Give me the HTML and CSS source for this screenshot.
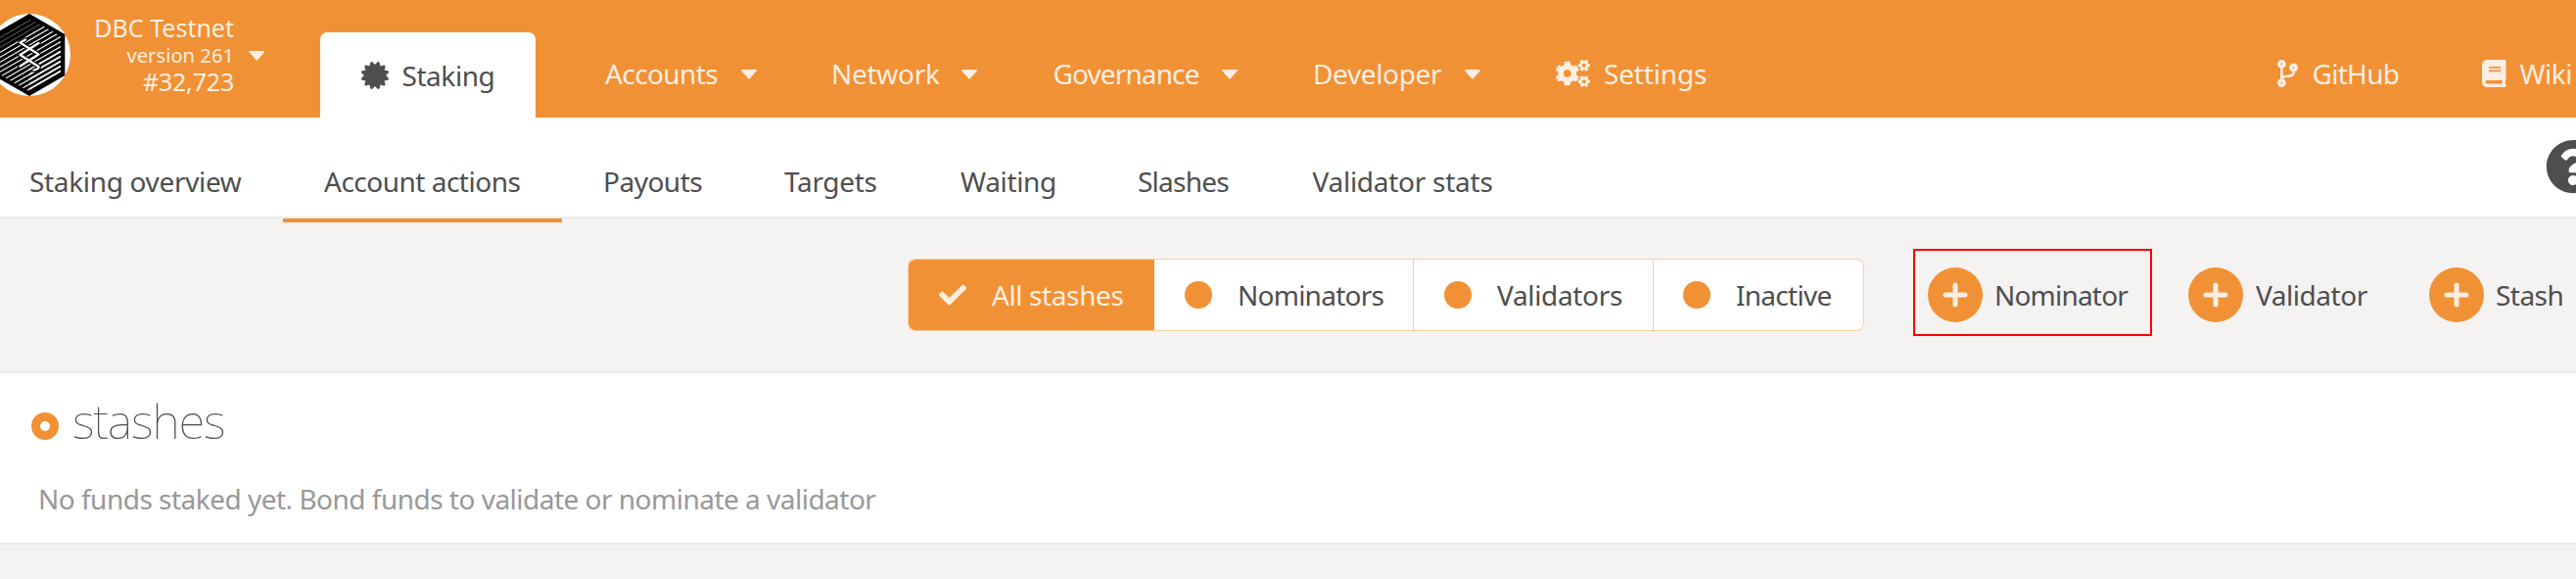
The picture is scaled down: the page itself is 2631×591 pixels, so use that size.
FILE: index.html
```
<!DOCTYPE html>
<html lang="en">
<head>
<meta charset="utf-8">
<title>Staking</title>
<link rel="stylesheet" href="styles.css">
</head>
<body>
<header class="header">
  <svg class="logo" viewBox="-12 14 84 84">
    <defs>
      <clipPath id="hex"><path d="M30 18.500L62 37V75L30 93.500L-2 75V37z"/></clipPath>
    </defs>
    <circle cx="30" cy="56" r="42" fill="#fff"/>
    <path d="M30 14L66.300 35V77L30 98L-6.300 77V35z" fill="#000"/>
    <g clip-path="url(#hex)" stroke="#fff">
      <path stroke-width=".6" stroke="#aaa" d="M-2 39.500L62 2.500M-2 44.500L62 7.500M-2 49.500L62 12.500"/>
      <path stroke-width="1.100" d="M-2 54.500L62 17.500M-2 59.500L62 22.500M-2 64.500L62 27.500M-2 69.500L62 32.500M-2 74.500L62 37.500M-2 79.500L62 42.500M-2 84.500L62 47.500M-2 89.500L62 52.500M-2 94.500L62 57.500M-2 99.500L62 62.500M-2 104.500L62 67.500M-2 109.500L62 72.500"/>
      <path stroke-width="1.700" d="M30 71L62 52.500M30 76L62 57.500M30 81L62 62.500M30 86L62 67.500M30 91L62 72.500"/>
    </g>
    <g fill="none" stroke-linejoin="round" stroke-linecap="round">
      <path stroke="#000" stroke-width="4.500" d="M26 40.500L20.500 43.500L39.500 55.500L20.500 67.500M39.500 44L20.500 56L39.500 68Q40.500 70 34.500 71.500"/>
      <path stroke="#fff" stroke-width="2.300" d="M26 40.500L20.500 43.500L39.500 55.500L20.500 67.500M39.500 44L20.500 56L39.500 68Q40.500 70 34.500 71.500"/>
    </g>
  </svg>
  <div class="chain">
    <div class="chain-name">DBC Testnet</div>
    <div class="chain-version">version 261</div>
    <div class="chain-block">#32,723</div>
  </div>
  <svg class="caret caret-chain" viewBox="0 0 16 10"><path d="M.8 0H15.200Q16.400 .3 15.600 1.400L8.800 9.300Q8 10.200 7.200 9.300L.4 1.400Q-.4 .3 .8 0z"/></svg>
  <a class="tab-active">
    <svg class="icon-28" viewBox="0 0 512 512"><path d="M458.622 255.920l45.985-45.005c13.708-12.977 7.316-36.039-10.664-40.339l-62.650-15.990 17.661-62.015c4.991-17.838-11.829-34.663-29.661-29.671l-61.994 17.667-15.984-62.671C337.085.197 313.765-6.276 300.990 7.228L256 53.570 211.011 7.229c-12.630-13.351-36.047-7.234-40.325 10.668l-15.984 62.671-61.995-17.667C74.870 57.907 58.056 74.738 63.046 92.572l17.661 62.015-62.650 15.990C.069 174.878-6.310 197.944 7.392 210.915l45.985 45.005-45.985 45.004c-13.708 12.977-7.316 36.039 10.664 40.339l62.650 15.990-17.661 62.015c-4.991 17.838 11.829 34.663 29.661 29.671l61.994-17.667 15.984 62.671c4.439 18.575 27.696 24.018 40.325 10.668L256 458.610l44.989 46.001c12.500 13.488 35.987 7.486 40.325-10.668l15.984-62.671 61.994 17.667c17.836 4.994 34.651-11.837 29.661-29.671l-17.661-62.015 62.650-15.990c17.987-4.302 24.366-27.367 10.664-40.339l-45.984-45.004z"/></svg>
    <span class="tab-label">Staking</span>
  </a>
  <nav class="menu">
    <a class="menu-item accounts"><span>Accounts</span><svg class="caret" viewBox="0 0 16 10"><path d="M.8 0H15.200Q16.400 .3 15.600 1.400L8.800 9.300Q8 10.200 7.200 9.300L.4 1.400Q-.4 .3 .8 0z"/></svg></a>
    <a class="menu-item network"><span>Network</span><svg class="caret" viewBox="0 0 16 10"><path d="M.8 0H15.200Q16.400 .3 15.600 1.400L8.800 9.300Q8 10.200 7.200 9.300L.4 1.400Q-.4 .3 .8 0z"/></svg></a>
    <a class="menu-item governance"><span>Governance</span><svg class="caret" viewBox="0 0 16 10"><path d="M.8 0H15.200Q16.400 .3 15.600 1.400L8.800 9.300Q8 10.200 7.200 9.300L.4 1.400Q-.4 .3 .8 0z"/></svg></a>
    <a class="menu-item developer"><span>Developer</span><svg class="caret" viewBox="0 0 16 10"><path d="M.8 0H15.200Q16.400 .3 15.600 1.400L8.800 9.300Q8 10.200 7.200 9.300L.4 1.400Q-.4 .3 .8 0z"/></svg></a>
    <a class="menu-item settings">
      <svg class="icon-cogs" viewBox="0 0 640 512">
        <path id="cog" d="M512.100 191l-8.200 14.300c-3 5.300-9.400 7.500-15.100 5.400-11.800-4.400-22.600-10.700-32.100-18.600-4.600-3.800-5.800-10.500-2.800-15.700l8.200-14.300c-6.900-8-12.300-17.300-15.900-27.400h-16.500c-6 0-11.200-4.300-12.200-10.300-2-12-2.100-24.600 0-37.100 1-6 6.200-10.400 12.200-10.400h16.500c3.600-10.100 9-19.400 15.900-27.400l-8.200-14.300c-3-5.200-1.900-11.900 2.800-15.700 9.500-7.900 20.400-14.200 32.100-18.600 5.700-2.100 12.100.1 15.100 5.400l8.200 14.300c10.500-1.900 21.200-1.900 31.700 0L552 6.300c3-5.300 9.400-7.500 15.100-5.400 11.800 4.400 22.600 10.700 32.100 18.600 4.600 3.800 5.800 10.500 2.800 15.700l-8.200 14.300c6.900 8 12.300 17.300 15.900 27.400h16.500c6 0 11.200 4.300 12.200 10.300 2 12 2.100 24.600 0 37.100-1 6-6.200 10.400-12.200 10.400h-16.500c-3.600 10.100-9 19.400-15.900 27.400l8.200 14.300c3 5.200 1.900 11.900-2.800 15.700-9.500 7.900-20.400 14.200-32.100 18.600-5.700 2.100-12.100-.1-15.100-5.400l-8.200-14.300c-10.400 1.900-21.200 1.900-31.700 0zm-10.500-58.800c38.500 29.600 82.400-14.300 52.800-52.800-38.500-29.700-82.400 14.300-52.800 52.800z"/>
        <use href="#cog" y="299"/>
        <path d="M386.300 286.100l33.700 16.800c10.100 5.800 14.500 18.100 10.500 29.100-8.900 24.200-26.400 46.400-42.600 65.800-7.400 8.900-20.200 11.100-30.300 5.300l-29.100-16.800c-16 13.700-34.600 24.600-54.900 31.700v33.600c0 11.600-8.300 21.600-19.700 23.600-24.600 4.200-50.400 4.400-75.900 0-11.500-2-20-11.900-20-23.600V418c-20.300-7.200-38.900-18-54.900-31.700L74 403c-10 5.800-22.900 3.600-30.300-5.300-16.200-19.400-33.300-41.600-42.200-65.700-4-10.900.4-23.200 10.500-29.100l33.300-16.800c-3.900-20.900-3.900-42.400 0-63.400L12 205.800c-10.100-5.800-14.600-18.100-10.500-29 8.900-24.200 26-46.400 42.200-65.800 7.400-8.900 20.200-11.100 30.300-5.300l29.100 16.800c16-13.700 34.600-24.600 54.900-31.700V57.100c0-11.500 8.200-21.500 19.600-23.500 24.600-4.200 50.500-4.400 76-.1 11.500 2 20 11.900 20 23.600v33.600c20.300 7.200 38.900 18 54.900 31.700l29.100-16.800c10-5.800 22.900-3.600 30.300 5.300 16.200 19.400 33.200 41.600 42.100 65.800 4 10.900.1 23.200-10 29.100l-33.700 16.800c3.900 21 3.900 42.500 0 63.500zm-117.600 21.100c59.200-77-28.700-164.900-105.700-105.700-59.200 77 28.700 164.900 105.700 105.700z"/>
      </svg>
      <span>Settings</span>
    </a>
    <a class="menu-item github">
      <svg class="icon-branch" viewBox="0 0 384 512"><path d="M384 144c0-44.200-35.800-80-80-80s-80 35.800-80 80c0 36.400 24.300 67.100 57.500 76.800-.6 16.100-4.200 28.500-11 36.900-15.400 19.200-49.300 22.400-85.200 25.700-28.200 2.600-57.400 5.400-81.300 16.900v-144c32.500-10.200 56-40.500 56-76.300 0-44.200-35.800-80-80-80S0 35.800 0 80c0 35.800 23.500 66.100 56 76.300v199.300C23.500 365.900 0 396.200 0 432c0 44.200 35.800 80 80 80s80-35.800 80-80c0-34-21.200-63.100-51.200-74.600 3.100-5.200 7.800-9.800 14.900-13.400 16.200-8.200 40.400-10.400 66.100-12.800 42.200-3.900 90-8.400 118.200-43.400 14-17.400 21.100-39.800 21.600-67.900 31.600-10.800 54.400-40.700 54.400-75.900zM80 64c8.800 0 16 7.200 16 16s-7.200 16-16 16-16-7.200-16-16 7.200-16 16-16zm0 384c-8.800 0-16-7.200-16-16s7.200-16 16-16 16 7.200 16 16-7.200 16-16 16zm224-320c8.800 0 16 7.200 16 16s-7.200 16-16 16-16-7.200-16-16 7.200-16 16-16z"/></svg>
      <span>GitHub</span>
    </a>
    <a class="menu-item wiki">
      <svg class="icon-book" viewBox="0 0 448 512"><path d="M448 360V24c0-13.300-10.700-24-24-24H96C43 0 0 43 0 96v320c0 53 43 96 96 96h328c13.300 0 24-10.700 24-24v-16c0-7.500-3.500-14.300-8.900-18.700-4.200-15.400-4.200-59.300 0-74.700 5.400-4.300 8.900-11.100 8.900-18.600zM128 134c0-3.300 2.700-6 6-6h212c3.300 0 6 2.700 6 6v20c0 3.300-2.700 6-6 6H134c-3.300 0-6-2.700-6-6v-20zm0 64c0-3.300 2.700-6 6-6h212c3.300 0 6 2.700 6 6v20c0 3.300-2.700 6-6 6H134c-3.300 0-6-2.700-6-6v-20zm253.400 250H96c-17.700 0-32-14.300-32-32 0-17.600 14.400-32 32-32h285.400c-1.900 17.100-1.900 46.900 0 64z"/></svg>
      <span>Wiki</span>
    </a>
  </nav>
</header>

<nav class="tabs">
  <a class="tab overview">Staking overview</a>
  <a class="tab actions selected">Account actions</a>
  <a class="tab payouts">Payouts</a>
  <a class="tab targets">Targets</a>
  <a class="tab waiting">Waiting</a>
  <a class="tab slashes">Slashes</a>
  <a class="tab stats">Validator stats</a>
  <svg class="help" viewBox="0 0 512 512"><path d="M504 256c0 136.997-111.043 248-248 248S8 392.997 8 256C8 119.083 119.043 8 256 8s248 111.083 248 248zM262.655 90c-54.497 0-89.255 22.957-116.549 63.758-3.536 5.286-2.353 12.415 2.715 16.258l34.699 26.310c5.205 3.947 12.621 3.008 16.665-2.122 17.864-22.658 30.113-35.797 57.303-35.797 20.429 0 45.698 13.148 45.698 32.958 0 14.976-12.363 22.667-32.534 33.976C247.128 238.528 216 254.941 216 296v4c0 6.627 5.373 12 12 12h56c6.627 0 12-5.373 12-12v-1.333c0-28.462 83.186-29.647 83.186-106.667 0-58.002-60.165-102-116.531-102zM256 338c-25.365 0-46 20.635-46 46 0 25.364 20.635 46 46 46s46-20.636 46-46c0-25.365-20.635-46-46-46z"/></svg>
</nav>

<main>
  <div class="toolbar">
    <div class="toggle">
      <button class="option all"><svg class="icon-28" viewBox="0 0 512 512"><path d="M173.898 439.404l-166.400-166.400c-9.997-9.997-9.997-26.206 0-36.204l36.203-36.204c9.997-9.998 26.207-9.998 36.204 0L192 312.690 432.095 72.596c9.997-9.997 26.207-9.997 36.204 0l36.203 36.204c9.997 9.997 9.997 26.206 0 36.204l-294.400 294.401c-9.998 9.997-26.207 9.997-36.204-.001z"/></svg><span>All stashes</span></button>
      <button class="option nominators"><i class="dot"></i><span>Nominators</span></button>
      <button class="option validators"><i class="dot"></i><span>Validators</span></button>
      <button class="option inactive"><i class="dot"></i><span>Inactive</span></button>
    </div>
    <button class="action add-nominator"><svg class="plus" viewBox="0 0 56 56"><circle cx="28" cy="28" r="28"/><path d="M18 28H38M28 18V38"/></svg><span>Nominator</span></button>
    <button class="action add-validator"><svg class="plus" viewBox="0 0 56 56"><circle cx="28" cy="28" r="28"/><path d="M18 28H38M28 18V38"/></svg><span>Validator</span></button>
    <button class="action add-stash"><svg class="plus" viewBox="0 0 56 56"><circle cx="28" cy="28" r="28"/><path d="M18 28H38M28 18V38"/></svg><span>Stash</span></button>
  </div>

  <section class="stashes">
    <h1 class="title"><i class="ring"></i><span>stashes</span></h1>
    <p class="empty">No funds staked yet. Bond funds to validate or nominate a validator</p>
  </section>
</main>
</body>
</html>
```
FILE: styles.css
```
* { box-sizing: border-box; }

body {
  margin: 0;
  height: 591px;
  overflow: hidden;
  background: #f4f3f1;
  color: #4e4e4e;
  font: 28px/40px "Noto Sans", "Open Sans", sans-serif;
  white-space: nowrap;
}

svg { display: block; flex: none; fill: currentColor; }
span { flex: none; }
.icon-28 { width: 28px; height: 28px; }

/* Header */
.header {
  display: flex;
  align-items: flex-start;
  height: 120px;
  overflow: hidden;
  background: #f19135;
  color: #ffeee1;
}
.logo { width: 84px; height: 84px; margin: 14px 0 0 -12px; }
.chain {
  width: 167px;
  flex: none;
  padding-top: 15px;
  text-align: right;
  font-size: 25px;
  line-height: 27.500px;
}
.chain-version { font-size: 20px; letter-spacing: .1px; }
.chain-block { letter-spacing: -.18px; }
.caret { width: 16px; height: 10px; margin-top: 2px; }
.caret-chain { width: 16.500px; margin: 52px 0 0 14.500px; }
.tab-active {
  display: flex;
  align-items: center;
  flex: none;
  width: 220px;
  height: 87px;
  margin: 33px 0 0 57px;
  padding-left: 42px;
  border-radius: 7px 7px 0 0;
  background: #fff;
  color: #4e4e4e;
}
.tab-label { margin-left: 13.500px; letter-spacing: -.44px; }
.menu { display: flex; flex: 1; padding-top: 55px; }
.menu-item {
  display: flex;
  flex: none;
  align-items: center;
  justify-content: space-between;
  height: 40px;
}
.accounts { width: 154.500px; margin-left: 71px; letter-spacing: -.6px; }
.network { width: 149px; margin-left: 76.500px; letter-spacing: -.28px; }
.governance { width: 188px; margin-left: 77.500px; letter-spacing: -.88px; }
.developer { width: 171px; margin-left: 77.500px; letter-spacing: -.36px; }
.settings { justify-content: flex-start; gap: 14px; width: 160px; margin-left: 77px; letter-spacing: -.16px; }
.github { justify-content: flex-start; gap: 14.500px; width: 130px; margin-left: 577px; letter-spacing: -.7px; }
.wiki { justify-content: flex-start; gap: 14px; width: 96px; margin-left: 79px; letter-spacing: -.5px; }
.icon-cogs { width: 35px; height: 28px; }
.icon-branch { width: 21px; height: 28px; }
.icon-book { width: 24.500px; height: 28px; }

/* Page tabs */
.tabs {
  display: flex;
  align-items: flex-start;
  height: 103px;
  border-bottom: 2px solid #ebebeb;
  background: #fff;
}
.tab { flex: none; height: 107px; padding-top: 45px; }
.selected { border-bottom: 4px solid #f19135; }
.overview { width: 289px; padding-left: 30px; letter-spacing: -.33px; }
.actions { width: 285px; padding-left: 42px; letter-spacing: -.5px; }
.payouts { width: 185px; padding-left: 42px; letter-spacing: -.5px; }
.targets { width: 181px; padding-left: 42px; letter-spacing: -.32px; }
.waiting { width: 180px; padding-left: 41px; letter-spacing: -.34px; }
.slashes { width: 178px; padding-left: 42px; letter-spacing: -.75px; }
.stats { width: 226px; padding-left: 42.500px; letter-spacing: -.26px; }
.help { width: 56px; height: 56px; margin: 22px 0 0 1076px; }

/* Filters and actions */
.toolbar {
  display: flex;
  align-items: center;
  height: 156px;
  padding-left: 928px;
}
button {
  display: flex;
  flex: none;
  align-items: center;
  padding: 0;
  border: 0;
  background: none;
  color: inherit;
  font: inherit;
}
.toggle {
  display: flex;
  flex: none;
  width: 975px;
  height: 72px;
  border-radius: 7px;
  background: #fff;
  box-shadow: 0 0 0 1px #f9cfa5;
  overflow: hidden;
}
.option { height: 72px; padding-left: 31px; border-right: 1px solid #f9cfa5; }
.option:last-child { border-right: 0; }
.all {
  width: 251px;
  border-right: 0;
  background: #f19135;
  color: #ffeee1;
  letter-spacing: -.39px;
}
.all span { margin-left: 26px; }
.dot { width: 28px; height: 28px; border-radius: 50%; background: #f19135; }
.nominators { width: 264.500px; letter-spacing: -.75px; }
.nominators span { margin-left: 26px; }
.validators { width: 245px; letter-spacing: -.33px; }
.validators span { margin-left: 26.500px; }
.inactive { flex: 1; padding-left: 30.500px; letter-spacing: -.73px; }
.inactive span { margin-left: 26px; }

.action { height: 89px; }
.plus { width: 56px; height: 56px; fill: #f19135; }
.plus path { stroke: #ffeee1; stroke-width: 5px; stroke-linecap: round; }
.action span { margin-left: 12px; }
.add-nominator {
  width: 244px;
  margin: -5px 0 0 51px;
  padding: 5px 0 0 13px;
  border: 2px solid #f00;
  letter-spacing: -.8px;
}
.add-validator { width: 190px; margin-left: 37px; letter-spacing: -.45px; }
.add-validator span { margin-left: 13px; }
.add-stash { margin-left: 56px; letter-spacing: -.55px; }

/* Stash list */
.stashes {
  height: 177px;
  border-top: 2px solid #ebebeb;
  border-bottom: 2px solid #ebebeb;
  background: #fff;
}
.title {
  display: flex;
  align-items: center;
  height: 64px;
  margin: 16px 0 0;
  padding-left: 32px;
  font-size: 49px;
  font-weight: 100;
  line-height: 64px;
  letter-spacing: -1px;
}
.title span { margin-left: 14px; }
.ring {
  width: 28px;
  height: 28px;
  margin-top: 12px;
  border: 9.500px solid #f19135;
  border-radius: 50%;
}
.empty { margin: 28px 0 0; padding-left: 39px; color: #989898; letter-spacing: -.51px; }
```
